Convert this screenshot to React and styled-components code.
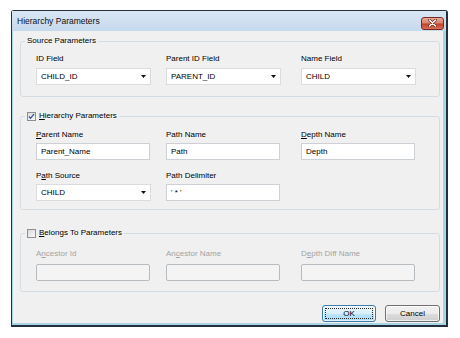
import React from "react";
import styled, { createGlobalStyle } from "styled-components";

const GlobalStyle = createGlobalStyle`
  * { box-sizing: border-box; }
  body {
    margin: 0;
    background: #ffffff;
    font-family: "Liberation Sans", Arial, sans-serif;
    font-size: 8px;
    color: #000;
  }
`;

const Window = styled.div`
  margin: 10px 0 0 11px;
  width: 437px;
  height: 317px;
  display: flex;
  flex-direction: column;
  border: 1px solid #24303a;
  border-right-width: 2px;
  border-bottom-width: 2px;
  border-radius: 3px 3px 0 0;
  background: #c9dbee;
`;

const TitleBar = styled.div`
  height: 20px;
  flex: none;
  display: flex;
  align-items: center;
  justify-content: space-between;
  padding: 0 2px 0 5px;
  background: linear-gradient(#d9e6f3, #c6d9ed);
  font-size: 8.5px;
  color: #101010;
`;

const CloseButton = styled.div`
  width: 23px;
  height: 13px;
  margin-top: 4px;
  border: 1px solid #7a2a1c;
  border-radius: 3px;
  background: linear-gradient(#e9a99a 0%, #d9826e 45%, #c2432a 55%, #d5705a 100%);
  display: flex;
  align-items: center;
  justify-content: center;
`;

const Client = styled.div`
  flex: 1;
  display: flex;
  flex-direction: column;
  background: #f0f0f0;
  border: 0 solid #a8d6e6;
  border-width: 0 3px 2px 1px;
  padding: 0 3px 1px 7px;
`;

const Group = styled.div`
  position: relative;
  margin-top: ${(p) => p.$gap}px;
  border: 1px solid #d5dde3;
  border-radius: 3px;
  padding: ${(p) => p.$pad};
`;

const Caption = styled.div`
  position: absolute;
  top: -6px;
  left: 4px;
  height: 10px;
  line-height: 10px;
  padding: 0 2px;
  background: #f0f0f0;
  display: flex;
  align-items: center;
  gap: 3px;
`;

const Row = styled.div`
  display: grid;
  grid-template-columns: 130px 135px 114px;
  margin-top: ${(p) => p.$gap || 0}px;
`;

const Field = styled.div`
  display: flex;
  flex-direction: column;
  gap: ${(p) => p.$gap}px;
`;

const Label = styled.div`
  height: 10px;
  line-height: 10px;
  color: ${(p) => (p.$disabled ? "#a3a3a3" : "#000")};
  white-space: nowrap;
`;

const Combo = styled.div`
  width: 115px;
  height: 17px;
  border: 1px solid #dcdcdc;
  background: #fff;
  display: flex;
  align-items: center;
  justify-content: space-between;
  padding: 0 4px 0 4px;
`;

const TextBox = styled.div`
  width: 114px;
  height: 17px;
  border: 1px solid ${(p) => (p.$disabled ? "#b7bcc0" : "#cdd0d4")};
  border-radius: ${(p) => (p.$disabled ? "2px" : "0")};
  background: ${(p) => (p.$disabled ? "#f4f4f4" : "#fff")};
  display: flex;
  align-items: center;
  padding: 0 4px;
`;

const Footer = styled.div`
  margin-top: 13px;
  display: flex;
  justify-content: flex-end;
  gap: 9px;
  padding-right: 0;
`;

const Button = styled.div`
  width: ${(p) => p.$w}px;
  height: 17px;
  border: 1px solid ${(p) => (p.$default ? "#3d7bad" : "#707070")};
  border-radius: 3px;
  background: ${(p) =>
    p.$default
      ? "linear-gradient(#e8f5fc 0%, #d9effa 50%, #bee6fd 51%, #a7d9f5 100%)"
      : "linear-gradient(#f2f2f2 0%, #ebebeb 50%, #dddddd 51%, #cfcfcf 100%)"};
  box-shadow: inset 0 0 0 1px rgba(255, 255, 255, 0.7);
  display: flex;
  align-items: center;
  justify-content: center;
  padding: 2px;
`;

const Focus = styled.div`
  flex: 1;
  align-self: stretch;
  border: 1px dotted #2a2a2a;
  display: flex;
  align-items: center;
  justify-content: center;
`;

const Arrow = () => (
  <svg width="5" height="3" viewBox="0 0 5 3">
    <path d="M0 0h5L2.5 3z" fill="#111" />
  </svg>
);

const Check = ({ checked }) => (
  <svg width="9" height="9" viewBox="0 0 9 9">
    <defs>
      <linearGradient id="cb" x1="0" y1="0" x2="1" y2="1">
        <stop offset="0" stopColor="#d8d8d8" />
        <stop offset="1" stopColor="#fbfbfb" />
      </linearGradient>
    </defs>
    <rect x="0.5" y="0.5" width="8" height="8" fill="url(#cb)" stroke="#8f8f8f" />
    {checked && <path d="M2 4.5l1.6 1.8L7 2" fill="none" stroke="#3b58a0" strokeWidth="1.3" />}
  </svg>
);

const CloseGlyph = () => (
  <svg width="9" height="8" viewBox="0 0 9 8">
    <path d="M1.5 1l6 6M7.5 1l-6 6" stroke="#5a1a10" strokeWidth="2.6" strokeLinecap="round" />
    <path d="M1.5 1l6 6M7.5 1l-6 6" stroke="#fff" strokeWidth="1.5" strokeLinecap="round" />
  </svg>
);

const Mn = styled.u`
  text-decoration: underline;
  text-underline-offset: 1px;
`;

const ComboField = ({ label, value }) => (
  <Field $gap={4}>
    <Label>{label}</Label>
    <Combo>
      <span>{value}</span>
      <Arrow />
    </Combo>
  </Field>
);

const TextField = ({ label, value, gap = 3, disabled }) => (
  <Field $gap={gap}>
    <Label $disabled={disabled}>{label}</Label>
    <TextBox $disabled={disabled}>{value}</TextBox>
  </Field>
);

const App = () => {
  return (
    <>
      <GlobalStyle />
      <Window>
        <TitleBar>
          <span>Hierarchy Parameters</span>
          <CloseButton>
            <CloseGlyph />
          </CloseButton>
        </TitleBar>
        <Client>
          <Group $gap={10} $pad="12px 0 11px 15px">
            <Caption>Source Parameters</Caption>
            <Row>
              <ComboField label="ID Field" value="CHILD_ID" />
              <ComboField label="Parent ID Field" value="PARENT_ID" />
              <ComboField label="Name Field" value="CHILD" />
            </Row>
          </Group>

          <Group $gap={19} $pad="13px 0 8px 15px">
            <Caption>
              <Check checked />
              <span>
                <Mn>H</Mn>ierarchy Parameters
              </span>
            </Caption>
            <Row>
              <TextField label={<><Mn>P</Mn>arent Name</>} value="Parent_Name" />
              <TextField label="Path Name" value="Path" />
              <TextField label={<><Mn>D</Mn>epth Name</>} value="Depth" />
            </Row>
            <Row $gap={11}>
              <Field $gap={3}>
                <Label>
                  P<Mn>a</Mn>th Source
                </Label>
                <Combo>
                  <span>CHILD</span>
                  <Arrow />
                </Combo>
              </Field>
              <TextField label="Path Delimiter" value="' * '" />
            </Row>
          </Group>

          <Group $gap={23} $pad="15px 0 10px 15px">
            <Caption>
              <Check />
              <span>
                <Mn>B</Mn>elongs To Parameters
              </span>
            </Caption>
            <Row>
              <TextField disabled gap={5} label={<>A<Mn>n</Mn>cestor Id</>} />
              <TextField disabled gap={5} label={<>An<Mn>c</Mn>estor Name</>} />
              <TextField disabled gap={5} label={<>D<Mn>e</Mn>pth Diff Name</>} />
            </Row>
          </Group>

          <Footer>
            <Button $w={54} $default>
              <Focus>OK</Focus>
            </Button>
            <Button $w={55}>Cancel</Button>
          </Footer>
        </Client>
      </Window>
    </>
  );
};

export default App;
